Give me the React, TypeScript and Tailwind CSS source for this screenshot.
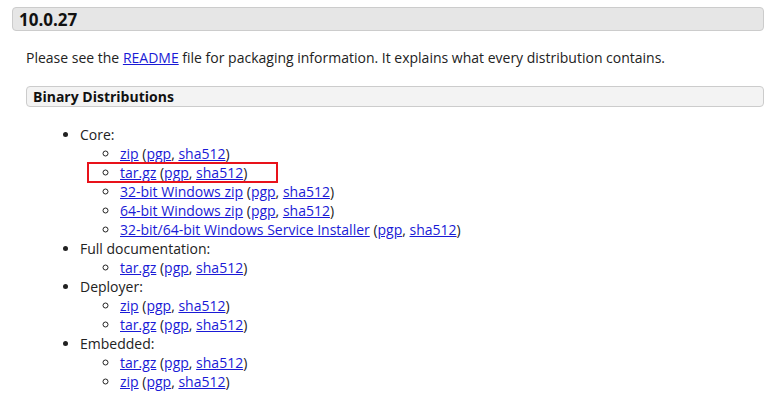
import React from 'react';

const link = 'text-[#1a1ad6] underline';

function Files({ name }: { name: string }) {
  return (
    <>
      <a href="#" className={link}>{name}</a> (<a href="#" className={link}>pgp</a>, <a href="#" className={link}>sha512</a>)
    </>
  );
}

export default function App() {
  const groups = [
    { title: 'Core:', items: ['zip', 'tar.gz', '32-bit Windows zip', '64-bit Windows zip', '32-bit/64-bit Windows Service Installer'] },
    { title: 'Full documentation:', items: ['tar.gz'] },
    { title: 'Deployer:', items: ['zip', 'tar.gz'] },
    { title: 'Embedded:', items: ['tar.gz', 'zip'] },
  ];

  return (
    <div className="w-[775px] h-[396px] bg-white text-[#222] overflow-hidden text-[14px] leading-[19px]" style={{ fontFamily: '"Open Sans", sans-serif' }}>
      <div className="pt-[7px] pl-[12px] pr-[11px]">
        <h3 className="h-[24px] flex items-center px-[6px] bg-[#e6e6e6] border border-[#cccccc] rounded-[4px] text-[17px] font-bold text-[#111]">
          10.0.27
        </h3>
        <div className="pl-[14px]">
          <p className="mt-[17px]">
            Please see the <a href="#" className={link}>README</a> file for packaging information. It explains what every distribution contains.
          </p>
          <h4 className="mt-[19px] h-[21px] flex items-center px-[6px] bg-[#f3f3f3] border border-[#cccccc] rounded-[4px] font-bold text-[#111]">
            Binary Distributions
          </h4>
          <ul className="list-disc pl-[54px] mt-[18px]">
            {groups.map((g) => (
              <li key={g.title}>
                {g.title}
                <ul className="list-[circle] pl-[40px]">
                  {g.items.map((it, i) => (
                    <li key={it + i} className="relative">
                      {g.title === 'Core:' && i === 1 && (
                        <div className="absolute left-[-33px] top-[-1px] w-[191px] h-[21px] border-2 border-[#e8121a]" />
                      )}
                      <Files name={it} />
                    </li>
                  ))}
                </ul>
              </li>
            ))}
          </ul>
        </div>
      </div>
    </div>
  );
}
